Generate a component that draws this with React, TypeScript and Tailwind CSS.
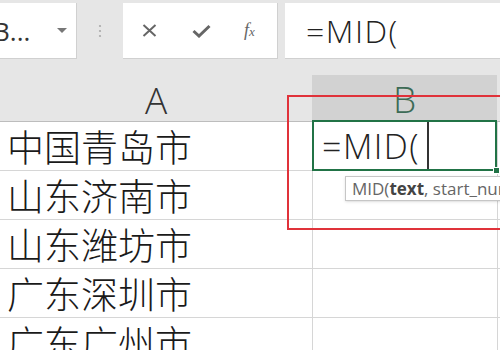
import React from 'react';

const rows = ['中国青岛市', '山东济南市', '山东潍坊市', '广东深圳市', '广东广州市'];

export default function App() {
  return (
    <div
      className="relative w-[500px] h-[350px] overflow-hidden bg-white text-[#222]"
      style={{ fontFamily: '"Open Sans", "Noto Sans CJK SC", sans-serif' }}
    >
      {/* Formula bar */}
      <div className="flex h-[60px] bg-[#e6e6e6] pt-[3px] pb-[1px]">
        <div className="flex items-center w-[77px] bg-white border-b border-r border-[#d0d0d0]">
          <span className="ml-[-7px] text-[26px] leading-none text-[#333]">B...</span>
          <svg className="ml-auto mr-[9px]" width="10" height="6" viewBox="0 0 10 6">
            <path d="M0 0 L10 0 L5 5 Z" fill="#777" />
          </svg>
        </div>
        <div className="flex w-[46px] items-center justify-center">
          <svg width="4" height="14" viewBox="0 0 4 14">
            <circle cx="2" cy="2" r="1.1" fill="#aaa" />
            <circle cx="2" cy="7" r="1.1" fill="#aaa" />
            <circle cx="2" cy="12" r="1.1" fill="#aaa" />
          </svg>
        </div>
        <div className="flex items-center w-[155px] bg-white border-b border-r border-[#d0d0d0]">
          <svg className="ml-[19px]" width="15" height="13" viewBox="0 0 15 13">
            <path d="M1.5 1 L13.5 12 M13.5 1 L1.5 12" stroke="#666" strokeWidth="2" />
          </svg>
          <svg className="ml-[35px]" width="19" height="14" viewBox="0 0 19 14">
            <path d="M1.5 7 L7 12 L17.5 2" stroke="#666" strokeWidth="3" fill="none" />
          </svg>
          <span
            className="ml-[33px] text-[18px] italic text-[#666]"
            style={{ fontFamily: '"Liberation Serif", serif' }}
          >
            f<span className="text-[13px]">x</span>
          </span>
        </div>
        <div className="w-[7px]" />
        <div className="flex flex-1 items-center bg-white border-b border-[#d0d0d0] pl-[21px]">
          <span className="text-[32px] font-light tracking-[1.5px] leading-none text-[#222]">=MID(</span>
        </div>
      </div>

      {/* Column headers */}
      <div className="flex h-[62px] bg-[#e6e6e6]">
        <div className="flex w-[312px] items-end justify-center border-b border-[#bdbdbd] pb-[3px]">
          <span className="text-[37px] font-light leading-none text-[#333]">A</span>
        </div>
        <div className="flex w-[185px] mt-[15px] items-end justify-center bg-[#d2d2d2] border-b-2 border-[#217346] pb-[3px]">
          <span className="text-[37px] font-light leading-none text-[#3d6b55]">B</span>
        </div>
        <div className="flex-1 border-b border-[#bdbdbd]" />
      </div>

      {/* Grid */}
      {rows.map((name, i) => (
        <div key={name} className="flex h-[49px] border-b border-[#d6d6d6]">
          <div
            className="flex w-[312px] items-center pl-[7px] text-[37px] leading-none text-[#1a1a1a]"
            style={{ fontFamily: '"Noto Sans CJK SC", sans-serif', fontWeight: 300 }}
          >
            {name}
          </div>
          {i === 0 ? (
            <div className="relative flex w-[185px] items-center border-2 border-t-0 border-[#217346] pl-[8px] -mb-[1px]">
              <span className="text-[34px] font-light tracking-[1.5px] leading-none text-[#222]">=MID(</span>
              <div className="absolute left-[113px] top-0 bottom-0 w-[2px] bg-[#333]" />
              <div className="absolute right-[-5px] bottom-[-5px] w-[7px] h-[7px] bg-[#217346] border border-white" />
            </div>
          ) : (
            <div className="w-[185px] border-l border-[#d6d6d6]" />
          )}
          <div className="flex-1 border-l border-[#d6d6d6]" />
        </div>
      ))}

      {/* Function tooltip */}
      <div className="absolute left-[345px] top-[176px] h-[25px] w-[170px] flex items-center bg-white border border-[#c6c6c6] shadow-sm pl-[6px] text-[17px] text-[#666] whitespace-nowrap">
        MID(<span className="font-bold text-[#444]">text</span>, start_num, num_chars)
      </div>

      {/* Red highlight frame */}
      <div className="absolute left-[287px] top-[95px] w-[240px] h-[135px] border-2 border-[#e0323a]" />
    </div>
  );
}
